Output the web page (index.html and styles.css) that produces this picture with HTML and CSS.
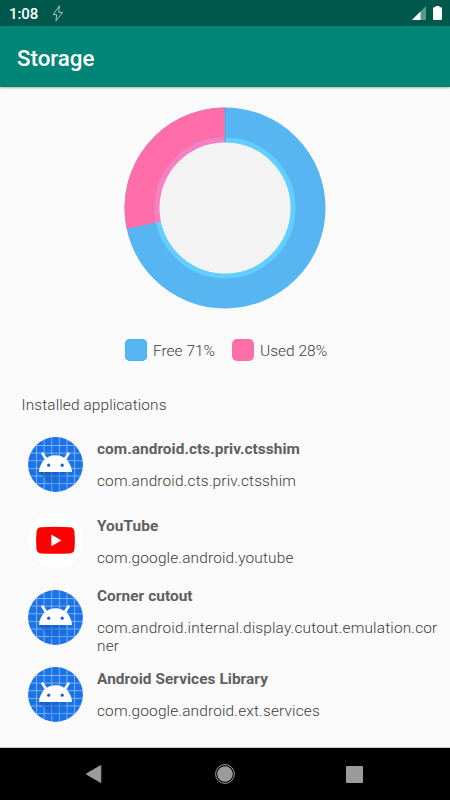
FILE: index.html
```html
<!DOCTYPE html>
<html lang="en">
<head>
<meta charset="utf-8">
<title>Storage</title>
<link rel="stylesheet" href="styles.css">
</head>
<body>
<svg class="defs" width="0" height="0" aria-hidden="true">
  <defs>
    <clipPath id="disc"><circle cx="27.5" cy="27.5" r="27.4"/></clipPath>
    <linearGradient id="shade" x1="0" y1="0" x2="0.6" y2="1">
      <stop offset="0" stop-color="#0d4fae" stop-opacity=".7"/>
      <stop offset="1" stop-color="#1a73e8" stop-opacity="0"/>
    </linearGradient>
    <symbol id="android" viewBox="0 0 55 55">
      <g clip-path="url(#disc)">
        <rect width="55" height="55" fill="#1a73e8"/>
        <path d="M8.5 0V55M16.1 0V55M23.7 0V55M31.4 0V55M39 0V55M46.6 0V55M0 8.5H55M0 16.1H55M0 23.7H55M0 31.4H55M0 39H55M0 46.6H55" stroke="#9dc2f5" stroke-width=".75"/>
        <path d="M11 35H38L43 55H29Z" fill="url(#shade)"/>
      </g>
      <path d="M11 35C11.500 25.500 18.500 18.200 27.500 18.200S43.500 25.500 44 35Z" fill="#fff"/>
      <path d="M14.500 16.500L18.700 23M40.500 16.500L36.300 23" stroke="#fff" stroke-width="2.600" stroke-linecap="round"/>
      <circle cx="20.700" cy="28.200" r="1.600" fill="#1a5fc8"/>
      <circle cx="34.200" cy="28.200" r="1.600" fill="#1a5fc8"/>
    </symbol>
  </defs>
</svg>
<div class="screen">
  <div class="status">
    <span class="clock">1:08</span>
    <svg class="bolt" width="12" height="18" viewBox="0 0 12 18"><path d="M7.400 .8L1.200 9.600H4.700L4 15.800L10.600 7.400H6.700Z" fill="none" stroke="#b9d3ce" stroke-width=".9"/></svg>
    <svg class="signal" width="14" height="14" viewBox="0 0 14 14"><path d="M14 0V14H0Z" fill="#5b958b"/><path d="M8.500 5.500V14H0Z" fill="#fff"/></svg>
    <svg class="battery" width="9" height="15" viewBox="0 0 9 15"><path d="M2.500 0H6.500V1.300H8Q9 1.300 9 2.300V13Q9 14 8 14H1Q0 14 0 13V2.300Q0 1.300 1 1.300H2.500Z" fill="#fff"/></svg>
  </div>
  <header class="bar"><h1>Storage</h1></header>
  <main>
    <svg class="chart" width="202" height="202" viewBox="-101 -101 202 202">
      <circle r="83" fill="none" stroke="#57b5f1" stroke-width="35"/>
      <path d="M0-100.500A100.500 100.500 0 0 0-98.300 20.900L-64.100 13.600A65.500 65.500 0 0 1 0-65.500Z" fill="#ff6ea8"/>
      <circle r="68" fill="none" stroke="#61cfff" stroke-width="5"/>
      <path d="M0-70.500A70.500 70.500 0 0 0-68.960 14.660L-64.100 13.600A65.500 65.500 0 0 1 0-65.500Z" fill="#ff7dc0"/>
      <path d="M.2-100.500V-65" stroke="#2eb4e6" stroke-width="1"/>
      <circle r="65.500" fill="#f3f3f3"/>
    </svg>
    <div class="legend">
      <span class="swatch free"></span><span class="label">Free 71%</span>
      <span class="swatch used"></span><span class="label">Used 28%</span>
    </div>
    <h2>Installed applications</h2>
    <ul>
      <li><svg class="icon"><use href="#android"/></svg><div class="info"><b>com.android.cts.priv.ctsshim</b><p>com.android.cts.priv.ctsshim</p></div></li>
      <li><svg class="icon" viewBox="0 0 55 55"><circle cx="27.500" cy="27.500" r="27.500" fill="#fff"/><path d="M13 14.200Q27.500 13.300 42 14.200Q46 14.400 46.500 19Q47.300 27.500 46.500 36Q46 40.200 42 40.400Q27.500 41.300 13 40.400Q9 40.200 8.500 36Q7.700 27.500 8.500 19Q9 14.400 13 14.200Z" fill="#f00"/><path d="M23.300 21.500V33.200L33.500 27.400Z" fill="#fff"/></svg><div class="info"><b>YouTube</b><p>com.google.android.youtube</p></div></li>
      <li><svg class="icon"><use href="#android"/></svg><div class="info"><b>Corner cutout</b><p>com.android.internal.display.cutout.emulation.corner</p></div></li>
      <li><svg class="icon"><use href="#android"/></svg><div class="info"><b>Android Services Library</b><p>com.google.android.ext.services</p></div></li>
    </ul>
  </main>
  <nav>
    <svg width="18" height="20" viewBox="0 0 18 20"><path d="M15.800 1.500V18.500L1.200 10Z" fill="#9b9b9b" stroke="#9b9b9b" stroke-linejoin="round"/></svg>
    <svg width="20" height="20" viewBox="0 0 20 20"><circle cx="10" cy="10" r="9.400" fill="none" stroke="#9b9b9b"/><circle cx="10" cy="10" r="7.800" fill="#9b9b9b"/></svg>
    <svg width="17" height="17" viewBox="0 0 17 17"><rect width="17" height="17" rx="1" fill="#9b9b9b"/></svg>
  </nav>
</div>
</body>
</html>
```

FILE: styles.css
```css
* { box-sizing: border-box; }
body, h1, h2, p, ul { margin: 0; padding: 0; }
body { font-family: Roboto, "Noto Sans", sans-serif; background: #fafafa; }
.defs { display: block; height: 0; }
svg { display: block; flex: none; }
.screen { width: 450px; height: 800px; display: flex; flex-direction: column; overflow: hidden; }
.status { height: 26px; flex: none; background: #00574b; display: flex; align-items: flex-start; padding: 0 8px 0 9px; }
.clock { width: 42px; color: #fff; font: 500 15px/26px Roboto, sans-serif; letter-spacing: -.1px; padding-top: 1px; }
.bolt { margin-top: 5px; margin-left: 1px; }
.signal { margin-left: auto; margin-top: 6px; }
.battery { margin: 6px 0 0 7px; }
.bar { height: 61px; flex: none; background: #008577; color: #fff; padding: 2px 17px 0; display: flex; align-items: center; box-shadow: 0 1px 2px rgba(0, 0, 0, .3); z-index: 1; }
h1 { font-size: 22.300px; font-weight: 500; line-height: 30px; }
main { flex: 1; min-height: 0; overflow: hidden; padding-top: 20px; border-bottom: 1px solid #c9c9c9; color: #3c3c3c; }
.chart { margin-left: 124px; }
.legend { display: flex; align-items: center; height: 22px; margin: 30px 0 0 125px; font-size: 15.500px; font-weight: 300; }
.swatch { width: 22px; height: 22px; border-radius: 5px; margin-right: 6px; }
.label { width: 79px; line-height: 20px; padding-top: 1px; white-space: nowrap; }
.free { background: #57b5f1; box-shadow: inset 0 0 0 1px #42b4f0; }
.used { background: #ff6ea8; }
h2 { font-size: 15.400px; font-weight: 300; letter-spacing: .12px; line-height: 20px; margin: 34px 0 0 21.500px; }
ul { list-style: none; margin-top: 11px; }
li { height: 76.600px; display: flex; align-items: center; padding: 0 10px 0 28px; }
.icon { width: 55px; height: 55px; margin-right: 14px; }
.info { flex: 1; min-width: 0; height: 67px; padding: 3px 0 1px; overflow: hidden; display: flex; flex-direction: column; justify-content: safe center; }
.info b { flex: none; font-size: 15.400px; line-height: 18px; font-weight: 700; letter-spacing: .05px; color: #606060; margin-bottom: 14px; }
.info p { flex: none; font-size: 15.400px; line-height: 18px; font-weight: 300; letter-spacing: .17px; overflow-wrap: anywhere; }
nav { height: 52px; flex: none; background: #000; display: flex; align-items: center; justify-content: space-between; padding: 0 87px 0 85px; }
```
